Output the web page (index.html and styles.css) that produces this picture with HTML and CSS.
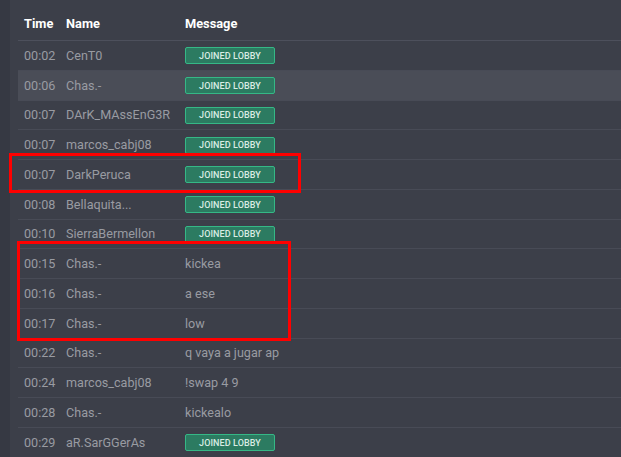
FILE: index.html
```html
<!DOCTYPE html>
<html>
<head>
<meta charset="utf-8">
<link rel="stylesheet" href="styles.css">
</head>
<body>
<div class="page">
  <div class="strip"></div>
  <div class="panel">
    <div class="row head">
      <div class="c-time">Time</div>
      <div class="c-name">Name</div>
      <div class="c-msg">Message</div>
    </div>
    <div class="row"><div class="c-time">00:02</div><div class="c-name">CenT0</div><div class="c-msg"><span class="badge">JOINED LOBBY</span></div></div>
    <div class="row hover"><div class="c-time">00:06</div><div class="c-name">Chas.-</div><div class="c-msg"><span class="badge">JOINED LOBBY</span></div></div>
    <div class="row"><div class="c-time">00:07</div><div class="c-name">DArK_MAssEnG3R</div><div class="c-msg"><span class="badge">JOINED LOBBY</span></div></div>
    <div class="row"><div class="c-time">00:07</div><div class="c-name">marcos_cabj08</div><div class="c-msg"><span class="badge">JOINED LOBBY</span></div></div>
    <div class="row"><div class="c-time">00:07</div><div class="c-name">DarkPeruca</div><div class="c-msg"><span class="badge">JOINED LOBBY</span></div></div>
    <div class="row"><div class="c-time">00:08</div><div class="c-name">Bellaquita...</div><div class="c-msg"><span class="badge">JOINED LOBBY</span></div></div>
    <div class="row"><div class="c-time">00:10</div><div class="c-name">SierraBermellon</div><div class="c-msg"><span class="badge">JOINED LOBBY</span></div></div>
    <div class="row"><div class="c-time">00:15</div><div class="c-name">Chas.-</div><div class="c-msg">kickea</div></div>
    <div class="row"><div class="c-time">00:16</div><div class="c-name">Chas.-</div><div class="c-msg">a ese</div></div>
    <div class="row"><div class="c-time">00:17</div><div class="c-name">Chas.-</div><div class="c-msg">low</div></div>
    <div class="row"><div class="c-time">00:22</div><div class="c-name">Chas.-</div><div class="c-msg">q vaya a jugar ap</div></div>
    <div class="row"><div class="c-time">00:24</div><div class="c-name">marcos_cabj08</div><div class="c-msg">!swap 4 9</div></div>
    <div class="row"><div class="c-time">00:28</div><div class="c-name">Chas.-</div><div class="c-msg">kickealo</div></div>
    <div class="row"><div class="c-time">00:29</div><div class="c-name">aR.SarGGerAs</div><div class="c-msg"><span class="badge">JOINED LOBBY</span></div></div>
  </div>
  <div class="mark mark-one"></div>
  <div class="mark mark-two"></div>
</div>
</body>
</html>
```
FILE: styles.css
```css
html, body {
  margin: 0;
  padding: 0;
  background: #3c3f49;
  overflow: hidden;
}
.page {
  position: relative;
  display: flex;
  width: 621px;
  height: 457px;
  font-family: Roboto, "Liberation Sans", sans-serif;
  font-size: 12.6px;
  color: #999ba2;
}
.strip {
  width: 10px;
  flex: none;
  background: #363943;
}
.panel {
  flex: 1;
  display: flex;
  flex-direction: column;
  padding-left: 8px;
}
.row {
  display: flex;
  align-items: center;
  height: 28.75px;
  border-top: 1px solid #484b56;
  flex: none;
}
.row.head {
  height: 41px;
  border-top: none;
  border-bottom: 1px solid #4d505c;
  align-items: flex-start;
  box-sizing: border-box;
  padding-top: 16px;
  line-height: 16px;
  font-size: 12.8px;
  color: #ffffff;
  font-weight: 700;
}
.row.head + .row {
  border-top: none;
}
.row.hover {
  background: #4a4d57;
}
.c-time {
  width: 42px;
  padding-left: 6px;
  flex: none;
}
.c-name {
  width: 119px;
  flex: none;
}
.c-msg {
  flex: 1;
}
.badge {
  display: inline-flex;
  align-items: center;
  justify-content: center;
  box-sizing: border-box;
  width: 90px;
  height: 17px;
  background: #2c7b61;
  border: 1px solid #35b886;
  border-radius: 2px;
  color: #d9ece4;
  font-size: 9px;
  font-weight: 500;
  letter-spacing: 0.1px;
  margin-top: 1px;
}
.mark {
  position: absolute;
  border: 3px solid #ff0000;
  box-sizing: border-box;
}
.mark-one {
  left: 9px;
  top: 153px;
  width: 292px;
  height: 40px;
}
.mark-two {
  left: 17px;
  top: 241px;
  width: 274px;
  height: 100px;
}
```
